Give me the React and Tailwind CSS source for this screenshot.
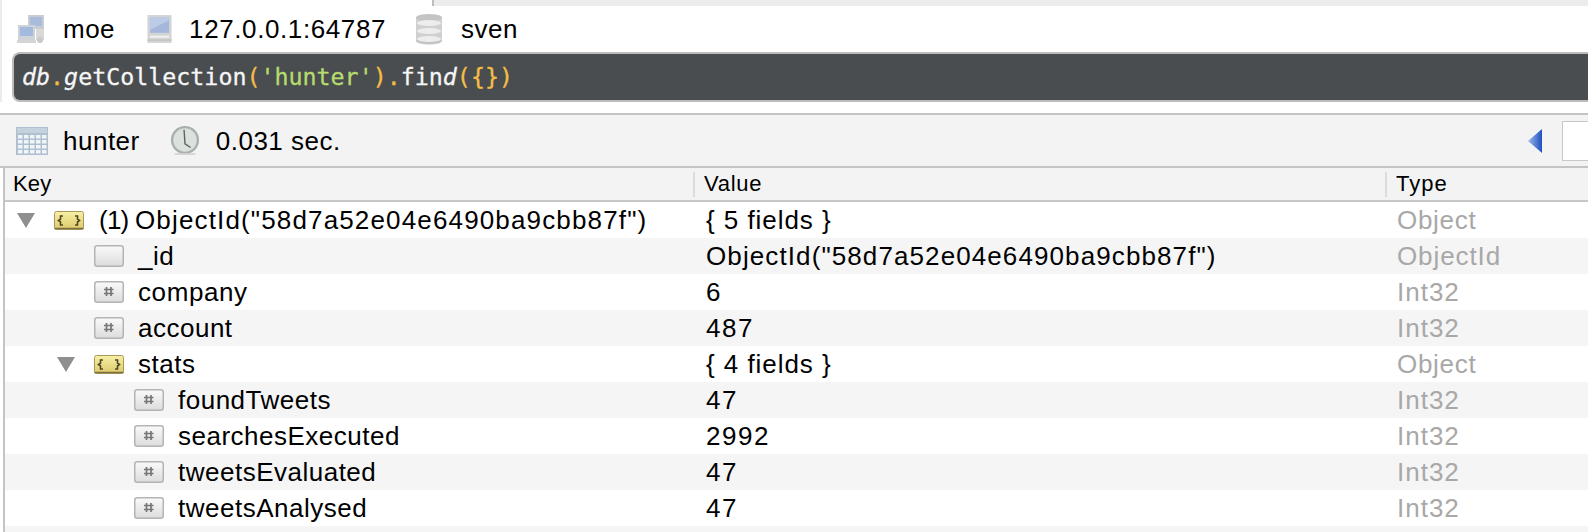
import React from 'react';

const rows = [
  { depth: 0, open: true, icon: 'object', prefix: '(1) ', key: 'ObjectId("58d7a52e04e6490ba9cbb87f")', keyTrack: 'tracking-[1.15px]', value: '{ 5 fields }', valueTrack: 'tracking-[0.95px]', type: 'Object', typeTrack: 'tracking-[0.7px]' },
  { depth: 1, icon: 'blank', key: '_id', keyTrack: 'tracking-[0.5px]', value: 'ObjectId("58d7a52e04e6490ba9cbb87f")', valueTrack: 'tracking-[1.1px]', type: 'ObjectId', typeTrack: 'tracking-[0.9px]' },
  { depth: 1, icon: 'number', key: 'company', keyTrack: 'tracking-[0.6px]', value: '6', valueTrack: 'tracking-[1.5px]', type: 'Int32', typeTrack: 'tracking-[1px]' },
  { depth: 1, icon: 'number', key: 'account', keyTrack: 'tracking-[0.5px]', value: '487', valueTrack: 'tracking-[1.5px]', type: 'Int32', typeTrack: 'tracking-[1px]' },
  { depth: 1, open: true, icon: 'object', key: 'stats', keyTrack: 'tracking-[0.5px]', value: '{ 4 fields }', valueTrack: 'tracking-[0.95px]', type: 'Object', typeTrack: 'tracking-[0.7px]' },
  { depth: 2, icon: 'number', key: 'foundTweets', keyTrack: 'tracking-[0.5px]', value: '47', valueTrack: 'tracking-[1.5px]', type: 'Int32', typeTrack: 'tracking-[1px]' },
  { depth: 2, icon: 'number', key: 'searchesExecuted', keyTrack: 'tracking-[0.5px]', value: '2992', valueTrack: 'tracking-[1.5px]', type: 'Int32', typeTrack: 'tracking-[1px]' },
  { depth: 2, icon: 'number', key: 'tweetsEvaluated', keyTrack: 'tracking-[0.5px]', value: '47', valueTrack: 'tracking-[1.5px]', type: 'Int32', typeTrack: 'tracking-[1px]' },
  { depth: 2, icon: 'number', key: 'tweetsAnalysed', keyTrack: 'tracking-[0.5px]', value: '47', valueTrack: 'tracking-[1.5px]', type: 'Int32', typeTrack: 'tracking-[1px]' },
];

function TypeIcon({ kind }) {
  if (kind === 'object') {
    return (
      <svg width="30" height="19" viewBox="0 0 30 19" className="shrink-0">
        <defs>
          <linearGradient id="objectFill" x1="0" y1="0" x2="0" y2="1">
            <stop offset="0" stopColor="#f8efa6" />
            <stop offset="1" stopColor="#ddc968" />
          </linearGradient>
        </defs>
        <rect x="0.5" y="0.5" width="29" height="18" rx="2" fill="url(#objectFill)" stroke="#a8985c" />
        <path d="M0.5 17.5 H29.5" stroke="#7d7040" strokeWidth="1.5" />
        <path d="M9 5 L6.5 5 L6.5 8 L4.5 9.5 L6.5 11 L6.5 14 L9 14 M21 5 L23.5 5 L23.5 8 L25.5 9.5 L23.5 11 L23.5 14 L21 14" fill="none" stroke="#4f4a28" strokeWidth="1.6" />
      </svg>
    );
  }
  return (
    <svg width="30" height="22" viewBox="0 0 30 22" className="shrink-0">
      <defs>
        <linearGradient id="cellFill" x1="0" y1="0" x2="0" y2="1">
          <stop offset="0" stopColor="#fafafa" />
          <stop offset="1" stopColor="#dcdcdc" />
        </linearGradient>
      </defs>
      <rect x="0.75" y="0.75" width="28.5" height="20.5" rx="2.5" fill="url(#cellFill)" stroke="#b4b4b4" strokeWidth="1.5" />
      {kind === 'number' && (
        <path d="M12.5 6 V15 M17 6 V15 M10 8.5 H19.5 M10 12.5 H19.5" stroke="#777" strokeWidth="1.7" fill="none" />
      )}
    </svg>
  );
}

function Triangle() {
  return (
    <svg width="18" height="15" viewBox="0 0 18 15" className="shrink-0">
      <path d="M0 0 H18 L9 15 Z" fill="#8f8f8f" />
    </svg>
  );
}

function NetworkIcon() {
  return (
    <svg width="28" height="30" viewBox="0 0 28 30">
      <rect x="11" y="1" width="16" height="14" fill="#c9cdd3" />
      <rect x="13" y="3" width="12" height="9" fill="#a9bcdc" />
      <rect x="19" y="15" width="8" height="11" fill="#d9d9d9" />
      <rect x="1" y="11" width="17" height="15" fill="#cfd2d6" />
      <rect x="3" y="13" width="13" height="9" fill="#a3b9dd" />
      <rect x="0" y="26" width="19" height="3" fill="#d5d5d5" />
      <circle cx="23" cy="26" r="3" fill="#c8c8c8" />
    </svg>
  );
}

function MonitorIcon() {
  return (
    <svg width="25" height="30" viewBox="0 0 26 30">
      <rect x="0.5" y="0.5" width="25" height="29" fill="#d4d4d4" />
      <rect x="3" y="3" width="20" height="16" fill="#a5b8dc" />
      <path d="M3 16 L23 6 V3 H3 Z" fill="#bccbe6" />
      <rect x="3" y="22" width="20" height="2" fill="#f2f2f2" />
      <rect x="0" y="26" width="26" height="1" fill="#b9b9b9" />
    </svg>
  );
}

function DatabaseIcon() {
  return (
    <svg width="28" height="32" viewBox="0 0 28 32">
      <rect x="1" y="4" width="26" height="24" fill="#d0d0d0" />
      <ellipse cx="14" cy="4.5" rx="13" ry="3.5" fill="#c4c4c4" />
      <ellipse cx="14" cy="28" rx="13" ry="3.5" fill="#c4c4c4" />
      <ellipse cx="14" cy="10" rx="12" ry="3" fill="#ededed" />
      <ellipse cx="14" cy="18" rx="12" ry="3" fill="#ededed" />
      <ellipse cx="14" cy="26" rx="12" ry="3" fill="#ededed" />
    </svg>
  );
}

function TableIcon() {
  return (
    <svg width="32" height="28" viewBox="0 0 32 28">
      <rect x="0" y="0" width="32" height="28" fill="#aebfcf" />
      <rect x="1" y="1" width="30" height="5" fill="#c5d2de" />
      {[8, 13, 18, 23].map((y) =>
        [2, 8, 14, 20, 26].map((x) => <rect key={`${x}-${y}`} x={x} y={y} width="4.5" height="3.5" fill="#f2f5f8" />)
      )}
    </svg>
  );
}

function ClockIcon() {
  return (
    <svg width="30" height="33" viewBox="0 0 32 33">
      <circle cx="16" cy="16" r="15" fill="#a9b0ac" />
      <circle cx="16" cy="16" r="12.5" fill="#dbe2de" />
      <path d="M15 5 L16 20 L22 24" fill="none" stroke="#5d6662" strokeWidth="1.5" />
      <path d="M5 31 H27" stroke="#d4d4d4" strokeWidth="2" />
    </svg>
  );
}

export default function App() {
  return (
    <div className="w-[1588px] h-[532px] overflow-hidden bg-white text-[26px] tracking-[0.5px] leading-none text-black font-['Liberation_Sans',Arial,sans-serif]">
      {/* Top sliver */}
      <div className="flex h-[6px]">
        <div className="w-[2px] bg-[#ececec]" />
        <div className="w-[430px]" />
        <div className="flex-1 bg-[#ececec] border-l-2 border-[#bdbdbd]" />
      </div>

      {/* Connection bar */}
      <div className="flex h-[46px] items-center border-l-2 border-[#ececec] pl-[15px]">
        <NetworkIcon />
        <span className="ml-[18px]">moe</span>
        <span className="ml-[32px] flex"><MonitorIcon /></span>
        <span className="ml-[17px] tracking-[0.6px]">127.0.0.1:64787</span>
        <span className="ml-[29px] flex"><DatabaseIcon /></span>
        <span className="ml-[18px]">sven</span>
      </div>

      {/* Query editor */}
      <div className="border-l-2 border-[#ececec] pl-[10px]">
        <div className="flex h-[50px] items-center rounded-l-[8px] border-y-2 border-l-2 border-[#bcbcbc] bg-[#4a4d50] pl-[8px] font-['DejaVu_Sans_Mono',monospace] text-[23.3px] tracking-normal text-[#f6f6f6] [-webkit-text-stroke:0.3px]">
          <span className="italic">db</span>
          <span className="text-[#f5bd45]">.</span>
          <span><span className="italic">g</span>etCollection</span>
          <span className="text-[#f5bd45]">(</span>
          <span className="text-[#b6dc6e]">'hunter'</span>
          <span className="text-[#f5bd45]">).</span>
          <span>fin<span className="italic">d</span></span>
          <span className="text-[#f5bd45]">({'{}'})</span>
        </div>
      </div>

      {/* Result bar */}
      <div className="mt-[11px] flex h-[55px] items-center border-y-2 border-[#c4c4c4] bg-[#f3f3f3] pl-[16px]">
        <TableIcon />
        <span className="ml-[15px]">hunter</span>
        <span className="ml-[30px] flex"><ClockIcon /></span>
        <span className="ml-[16px]">0.031 sec.</span>
        <svg width="15" height="24" viewBox="0 0 15 24" className="ml-auto">
          <defs>
            <linearGradient id="backFill" x1="0" y1="0" x2="1" y2="0">
              <stop offset="0" stopColor="#9dbbea" />
              <stop offset="1" stopColor="#1f4fc0" />
            </linearGradient>
          </defs>
          <path d="M14 0 V24 L0 12 Z" fill="url(#backFill)" />
        </svg>
        <div className="ml-[19px] h-[40px] w-[26px] border border-r-0 border-[#c8c8c8] bg-white" />
      </div>

      {/* Tree table */}
      <div className="ml-[3px] border-l-2 border-[#c4c4c4]">
        <div className="flex h-[34px] items-center border-b-2 border-[#c8c8c8] bg-[#f3f3f3] text-[22px]">
          <div className="w-[688px] pl-[8px] tracking-[0.2px]">Key</div>
          <div className="h-[25px] w-[2px] bg-[#dcdcdc]" />
          <div className="w-[690px] pl-[9px] tracking-[0.7px]">Value</div>
          <div className="h-[25px] w-[2px] bg-[#dcdcdc]" />
          <div className="pl-[9px] tracking-[1px]">Type</div>
        </div>
        {rows.map((row, i) => (
          <div key={i} className={`flex h-[36px] items-center ${i % 2 === 1 ? 'bg-[#f5f5f5]' : 'bg-white'}`}>
            <div className="flex w-[690px] items-center" style={{ paddingLeft: 49 + row.depth * 40 }}>
              {row.open && (
                <span className="-ml-[37px] mr-[19px] flex"><Triangle /></span>
              )}
              <TypeIcon kind={row.icon} />
              <span className={`${row.depth === 0 ? 'ml-[15px]' : 'ml-[14px]'} ${row.keyTrack} whitespace-pre`}>
                {row.prefix && <span className="tracking-[-0.75px]">{row.prefix}</span>}
                {row.key}
              </span>
            </div>
            <div className={`w-[692px] pl-[11px] ${row.valueTrack}`}>{row.value}</div>
            <div className={`pl-[10px] text-[#a8a8a8] ${row.typeTrack}`}>{row.type}</div>
          </div>
        ))}
        <div className="h-[6px] bg-[#f5f5f5]" />
      </div>
    </div>
  );
}
